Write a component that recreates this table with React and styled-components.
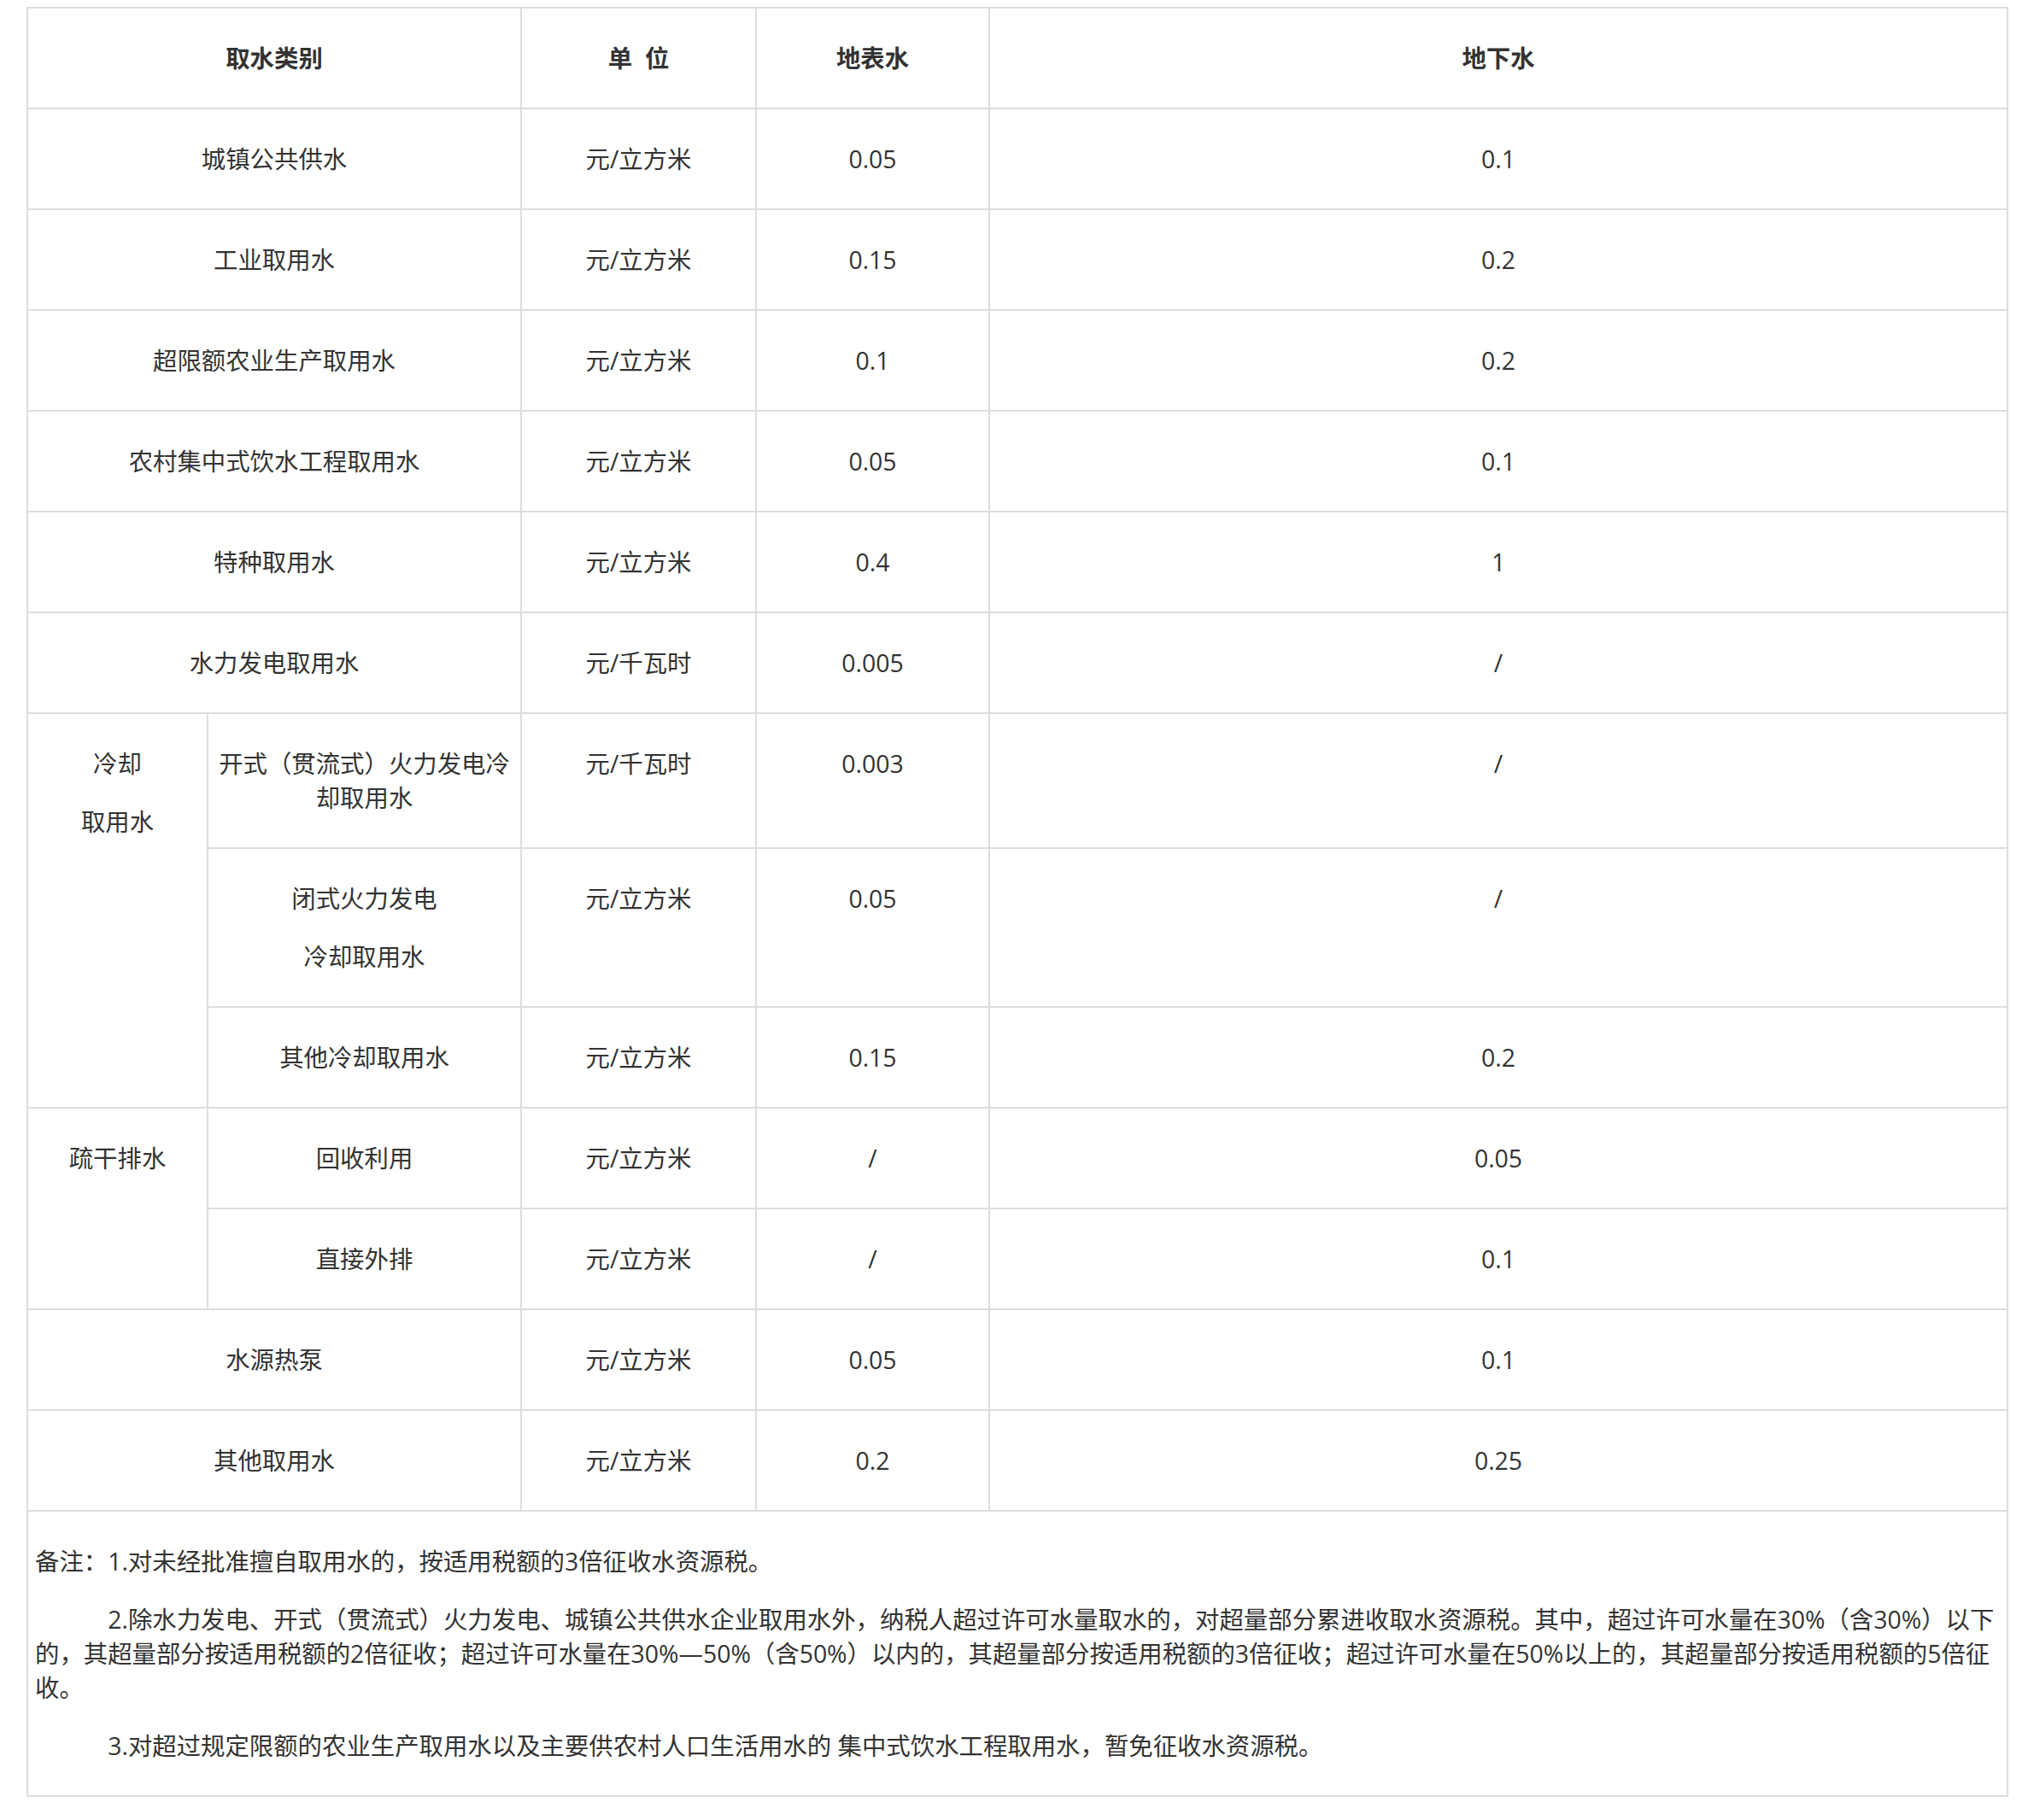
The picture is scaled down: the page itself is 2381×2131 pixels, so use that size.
import React from 'react';
import styled, {createGlobalStyle} from 'styled-components';

const GlobalStyle = createGlobalStyle`
  html,
  body {
    margin: 0;
    background: #ffffff;
  }

  body {
    font-family: 'Open Sans', 'Noto Sans CJK SC', sans-serif;
    color: #333333;
  }
`;

const columns = [211, 367, 275, 273, 1192];

const simpleRows = [
  ['城镇公共供水', '元/立方米', '0.05', '0.1'],
  ['工业取用水', '元/立方米', '0.15', '0.2'],
  ['超限额农业生产取用水', '元/立方米', '0.1', '0.2'],
  ['农村集中式饮水工程取用水', '元/立方米', '0.05', '0.1'],
  ['特种取用水', '元/立方米', '0.4', '1'],
  ['水力发电取用水', '元/千瓦时', '0.005', '/'],
];

const groups = [
  {
    label: ['冷却', '取用水'],
    items: [
      [['开式（贯流式）火力发电冷却取用水'], '元/千瓦时', '0.003', '/'],
      [['闭式火力发电', '冷却取用水'], '元/立方米', '0.05', '/'],
      [['其他冷却取用水'], '元/立方米', '0.15', '0.2'],
    ],
  },
  {
    label: ['疏干排水'],
    items: [
      [['回收利用'], '元/立方米', '/', '0.05'],
      [['直接外排'], '元/立方米', '/', '0.1'],
    ],
  },
];

const tailRows = [
  ['水源热泵', '元/立方米', '0.05', '0.1'],
  ['其他取用水', '元/立方米', '0.2', '0.25'],
];

const notes = [
  {indent: false, text: '备注：1.对未经批准擅自取用水的，按适用税额的3倍征收水资源税。'},
  {
    indent: true,
    text:
      '2.除水力发电、开式（贯流式）火力发电、城镇公共供水企业取用水外，纳税人超过许可水量取水的，对超量部分累进收取水资源税。其中，超过许可水量在30%（含30%）以下的，其超量部分按适用税额的2倍征收；超过许可水量在30%—50%（含50%）以内的，其超量部分按适用税额的3倍征收；超过许可水量在50%以上的，其超量部分按适用税额的5倍征收。',
  },
  {
    indent: true,
    text: '3.对超过规定限额的农业生产取用水以及主要供农村人口生活用水的 集中式饮水工程取用水，暂免征收水资源税。',
  },
];

function App() {
  return (
    <Page>
      <GlobalStyle />
      <Table>
        <colgroup>
          {columns.map((w, i) => (
            <Col key={i} $w={w} />
          ))}
        </colgroup>
        <tbody>
          <tr>
            <HeadCell colSpan={2}>
              <P>取水类别</P>
            </HeadCell>
            <HeadCell>
              <P>单&nbsp;&nbsp;位</P>
            </HeadCell>
            <HeadCell>
              <P>地表水</P>
            </HeadCell>
            <HeadCell>
              <P>地下水</P>
            </HeadCell>
          </tr>

          {simpleRows.map((row) => (
            <SimpleRow key={row[0]} row={row} />
          ))}

          {groups.map((group) =>
            group.items.map((item, i) => (
              <tr key={item[0].join('')}>
                {i === 0 && (
                  <Cell rowSpan={group.items.length}>
                    {group.label.map((line) => (
                      <P key={line}>{line}</P>
                    ))}
                  </Cell>
                )}
                <Cell>
                  {item[0].map((line) => (
                    <P key={line}>{line}</P>
                  ))}
                </Cell>
                <Cell>
                  <P>{item[1]}</P>
                </Cell>
                <Cell>
                  <P>{item[2]}</P>
                </Cell>
                <Cell>
                  <P>{item[3]}</P>
                </Cell>
              </tr>
            ))
          )}

          {tailRows.map((row) => (
            <SimpleRow key={row[0]} row={row} />
          ))}

          <tr>
            <NoteCell colSpan={5}>
              {notes.map((note, i) => (
                <NoteText key={i} $indent={note.indent}>
                  {note.text}
                </NoteText>
              ))}
            </NoteCell>
          </tr>
        </tbody>
      </Table>
    </Page>
  );
}

function SimpleRow({row}) {
  return (
    <tr>
      <Cell colSpan={2}>
        <P>{row[0]}</P>
      </Cell>
      <Cell>
        <P>{row[1]}</P>
      </Cell>
      <Cell>
        <P>{row[2]}</P>
      </Cell>
      <Cell>
        <P>{row[3]}</P>
      </Cell>
    </tr>
  );
}

const Page = styled.div`
  padding: 8px 0 24px 31px;
`;

const Table = styled.table`
  width: 2320px;
  table-layout: fixed;
  border-collapse: collapse;
  font-size: 28.4px;
  line-height: 40px;
`;

const Col = styled.col`
  width: ${(props) => props.$w}px;
`;

const Cell = styled.td`
  padding: 10px 8px;
  border: 2px solid #dddddd;
  text-align: center;
  vertical-align: top;
  color: #333333;
  word-break: break-all;
`;

const HeadCell = styled(Cell)`
  font-weight: 700;
`;

const NoteCell = styled(Cell)`
  text-align: left;
`;

const P = styled.p`
  margin: 28px 0;
`;

const NoteText = styled(P)`
  text-indent: ${(props) => (props.$indent ? '3em' : '0')};
`;

export default App;
